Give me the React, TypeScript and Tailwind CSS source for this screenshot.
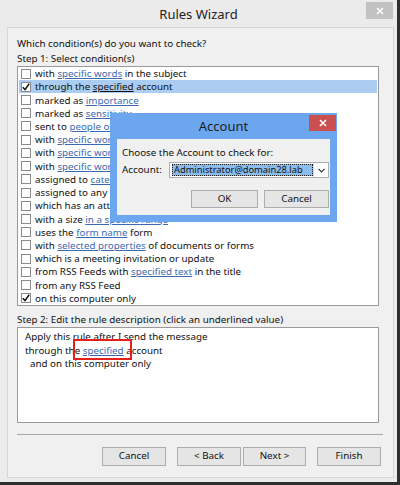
import React from "react";

const font = { fontFamily: '"Noto Sans", "Liberation Sans", sans-serif' };

type Part = string | { link: string; dark?: boolean };

const rows: { parts: Part[]; checked?: boolean; selected?: boolean }[] = [
  { parts: ["with ", { link: "specific words" }, " in the subject"] },
  { parts: ["through the ", { link: "specified", dark: true }, " account"], checked: true, selected: true },
  { parts: ["marked as ", { link: "importance" }] },
  { parts: ["marked as ", { link: "sensitivity" }] },
  { parts: ["sent to ", { link: "people or public group" }] },
  { parts: ["with ", { link: "specific words" }, " in the body"] },
  { parts: ["with ", { link: "specific words" }, " in the subject or body"] },
  { parts: ["with ", { link: "specific words" }, " in the message header"] },
  { parts: ["assigned to ", { link: "category" }, " category"] },
  { parts: ["assigned to any category"] },
  { parts: ["which has an attachment"] },
  { parts: ["with a size ", { link: "in a specific range" }] },
  { parts: ["uses the ", { link: "form name" }, " form"] },
  { parts: ["with ", { link: "selected properties" }, " of documents or forms"] },
  { parts: ["which is a meeting invitation or update"] },
  { parts: ["from RSS Feeds with ", { link: "specified text" }, " in the title"] },
  { parts: ["from any RSS Feed"] },
  { parts: ["on this computer only"], checked: true },
];

function Check() {
  return (
    <svg width="8" height="8" viewBox="0 0 8 8" className="block">
      <path d="M0.8 4.2 L3 6.6 L7.2 0.8" fill="none" stroke="#111" strokeWidth="1.5" />
    </svg>
  );
}

function Btn({ label, w }: { label: string; w: string }) {
  return (
    <div
      className={`${w} h-[19px] border border-[#adadad] bg-[#e5e5e5] flex items-center justify-center text-[9.8px] text-[#111]`}
    >
      {label}
    </div>
  );
}

export default function App() {
  return (
    <div className="w-[400px] h-[485px] bg-[#2e2e2e] relative" style={font}>
      <div className="w-[397px] h-[482px] bg-[#ebebeb] flex flex-col">
        {/* title bar */}
        <div className="h-[27px] relative flex items-center justify-center">
          <span className="text-[13px] text-[#222] leading-none mt-[2px]">Rules Wizard</span>
          <div className="absolute top-[2px] left-[366px] w-[27px] h-[17px] bg-[#c2c2c2] flex items-center justify-center">
            <svg width="8" height="8" viewBox="0 0 8 8">
              <path d="M1 1 L7 7 M7 1 L1 7" stroke="#fff" strokeWidth="1.6" />
            </svg>
          </div>
        </div>
        {/* inner panel */}
        <div className="ml-[7px] w-[387px] h-[451px] border border-[#d6d6d6] bg-[#f0f0f0] flex flex-col pl-[9px] pt-[8px] text-[#111] text-[9.8px]">
          <div className="h-[15px] leading-[15px]">Which condition(s) do you want to check?</div>
          <div className="h-[15px] leading-[15px]">Step 1: Select condition(s)</div>
          {/* list */}
          <div className="w-[362px] h-[240px] border border-[#9a9a9a] bg-white flex flex-col">
            {rows.map((r, i) => (
              <div
                key={i}
                className={`h-[13.22px] flex items-center pl-[3px] ${r.selected ? "bg-[#aacdf1] mr-[1px] ml-[1px]" : ""}`}
              >
                <div
                  className={`w-[10px] h-[10px] border border-[#8a8a8a] bg-white flex items-center justify-center shrink-0 ${r.selected ? "-ml-[1px]" : ""}`}
                >
                  {r.checked && <Check />}
                </div>
                <div className="ml-[4px] whitespace-nowrap leading-[13px]">
                  {r.parts.map((p, j) =>
                    typeof p === "string" ? (
                      <span key={j}>{p}</span>
                    ) : (
                      <span
                        key={j}
                        className={p.dark ? "underline text-[#111]" : "underline text-[#3a6bb2]"}
                      >
                        {p.link}
                      </span>
                    )
                  )}
                </div>
              </div>
            ))}
          </div>
          <div className="h-[21px] pt-[6px] leading-[15px]">Step 2: Edit the rule description (click an underlined value)</div>
          {/* description */}
          <div className="w-[362px] h-[96px] border border-[#9a9a9a] bg-white pl-[7px] pt-[2px] relative">
            <div className="h-[13.5px] leading-[13.5px]">Apply this rule after I send the message</div>
            <div className="h-[13.5px] leading-[13.5px]">
              through the <span className="underline text-[#3a6bb2]">specified</span> account
            </div>
            <div className="h-[13.5px] leading-[13.5px] pl-[5px]">and on this computer only</div>
            <div className="absolute left-[55px] top-[11px] w-[59px] h-[21px] border-2 border-[#e3201c]" />
          </div>
          {/* separator */}
          <div className="w-[366px] h-px bg-[#a8a8a8] mt-[11px]" />
          {/* buttons */}
          <div className="flex mt-[12px] pl-[85px]">
            <Btn label="Cancel" w="w-[64px]" />
            <div className="w-[11px]" />
            <Btn label="< Back" w="w-[64px]" />
            <div className="w-[2px]" />
            <Btn label="Next >" w="w-[63px]" />
            <div className="w-[11px]" />
            <Btn label="Finish" w="w-[64px]" />
          </div>
        </div>
      </div>

      {/* Account dialog */}
      <div className="absolute left-[110px] top-[113px] w-[227px] h-[109px] bg-[#6ca6ef] flex flex-col px-[7px] pb-[7px]">
        <div className="h-[26px] relative flex items-center justify-center">
          <span className="text-[13px] text-[#1e1e1e] leading-none">Account</span>
          <div className="absolute top-[2px] -right-[6px] w-[27px] h-[16px] bg-[#c9504f] flex items-center justify-center">
            <svg width="8" height="8" viewBox="0 0 8 8">
              <path d="M1 1 L7 7 M7 1 L1 7" stroke="#fff" strokeWidth="1.6" />
            </svg>
          </div>
        </div>
        <div className="flex-1 bg-[#f0f0f0] flex flex-col pl-[5px] pt-[7px] text-[9.8px] text-[#111]">
          <div className="h-[14px] leading-[14px]">Choose the Account to check for:</div>
          <div className="flex items-center mt-[2px]">
            <span className="w-[47px]">Account:</span>
            <div className="w-[160px] h-[16px] border border-[#abadb3] bg-white flex items-center">
              <div className="ml-[2px] w-[141px] h-[12px] bg-[#8cbcec] border border-dotted border-[#1a1a1a] flex items-center leading-none pl-[1px] whitespace-nowrap overflow-hidden text-[9.3px]">
                Administrator@domain28.lab
              </div>
              <div className="ml-auto w-[15px] h-[14px] border-l border-[#d8d8d8] flex items-center justify-center">
                <svg width="7" height="5" viewBox="0 0 7 5">
                  <path d="M0.5 0.8 L3.5 3.8 L6.5 0.8" fill="none" stroke="#333" strokeWidth="1.2" />
                </svg>
              </div>
            </div>
          </div>
          <div className="flex mt-[12px] pl-[69px]">
            <div className="w-[67px] h-[18px] border border-[#adadad] bg-[#e5e5e5] flex items-center justify-center">OK</div>
            <div className="w-[6px]" />
            <div className="w-[65px] h-[18px] border border-[#adadad] bg-[#e5e5e5] flex items-center justify-center">Cancel</div>
          </div>
        </div>
      </div>
    </div>
  );
}
